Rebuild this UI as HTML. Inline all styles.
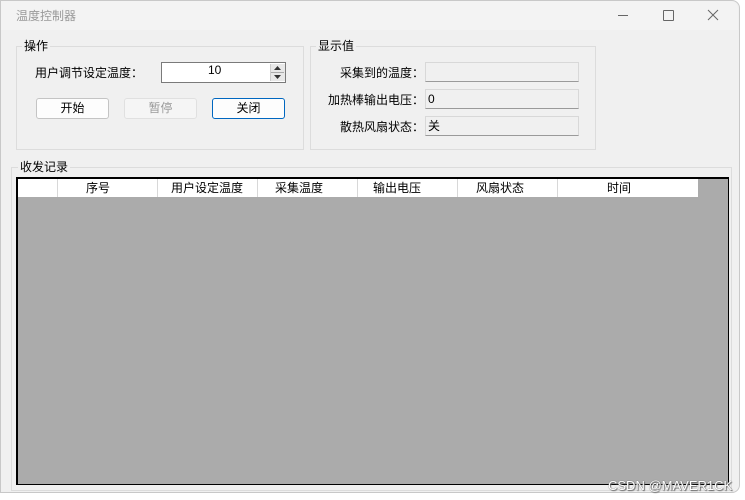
<!DOCTYPE html>
<html><head><meta charset="utf-8"><style>
body{margin:0;width:745px;height:500px;background:#fff;position:relative;overflow:hidden;font-family:"Liberation Sans","Noto Sans CJK SC",sans-serif;font-size:12px;color:#000}
.a{position:absolute}
.win{left:0;top:0;width:740px;height:493px;background:#f0f0f0;border:1px solid #c8c8c8;border-radius:0 8px 8px 0;box-sizing:border-box}
.title{left:1px;top:1px;width:737px;height:29px;background:#f3f3f3;border-radius:0 8px 0 0}
.gb{border:1px solid #dcdcdc;box-sizing:border-box}
.gl{background:#f0f0f0;padding:0 2px;font-size:12px}
.btn{height:21px;border:1px solid #c4c4c4;border-radius:3px;background:#fdfdfd;box-sizing:border-box;text-align:center;line-height:19px}
.tb{width:154px;height:20px;border:1px solid #d8d8d8;border-bottom:1px solid #9a9a9a;background:#f0f0f0;box-sizing:border-box;padding-left:2px;line-height:18px}
.lbl{text-align:right;width:120px}
.hd{top:179px;height:18px;background:#fff;border-right:1px solid #d8d8d8;box-sizing:border-box}
.ht{top:179px;line-height:18px;width:100px;text-align:center}
</style></head><body>
<div class="a win"></div>
<div class="a title"></div>
<div class="a" style="left:16px;top:7px;color:#999;font-size:12px">温度控制器</div>
<div class="a" style="left:618px;top:15px;width:10px;height:1px;background:#666"></div>
<div class="a" style="left:663px;top:10px;width:9px;height:9px;border:1px solid #666;border-radius:1px"></div>
<svg class="a" style="left:707px;top:9px" width="12" height="12"><path d="M1 1L11 11M11 1L1 11" stroke="#666" stroke-width="1"/></svg>

<div class="a gb" style="left:16px;top:46px;width:288px;height:104px"></div>
<div class="a gl" style="left:22px;top:37px">操作</div>
<div class="a" style="left:35px;top:64px">用户调节设定温度：</div>
<div class="a" style="left:161px;top:62px;width:125px;height:21px;background:#fff;border:1px solid #7a7a7a;box-sizing:border-box"></div>
<div class="a" style="left:208px;top:63px">10</div>
<div class="a" style="left:270px;top:64px;width:14px;height:17px;background:#e8e8e8;border-left:1px solid #ccc"></div>
<svg class="a" style="left:271px;top:64px" width="13" height="17"><path d="M3 6L6.5 2L10 6Z M3 11L6.5 15L10 11Z" fill="#333"/><line x1="0" y1="8.5" x2="13" y2="8.5" stroke="#aaa"/></svg>
<div class="a btn" style="left:36px;top:98px;width:73px">开始</div>
<div class="a btn" style="left:124px;top:98px;width:73px;color:#9a9a9a;border-color:#e0e0e0;background:#f5f5f5">暂停</div>
<div class="a btn" style="left:212px;top:98px;width:73px;border:1px solid #0067c0">关闭</div>

<div class="a gb" style="left:310px;top:46px;width:286px;height:104px"></div>
<div class="a gl" style="left:316px;top:37px">显示值</div>
<div class="a lbl" style="left:304px;top:64px">采集到的温度：</div>
<div class="a tb" style="left:425px;top:62px"></div>
<div class="a lbl" style="left:304px;top:91px">加热棒输出电压：</div>
<div class="a tb" style="left:425px;top:89px">0</div>
<div class="a lbl" style="left:304px;top:118px">散热风扇状态：</div>
<div class="a tb" style="left:425px;top:116px">关</div>

<div class="a gb" style="left:11px;top:167px;width:721px;height:324px"></div>
<div class="a gl" style="left:18px;top:158px">收发记录</div>
<div class="a" style="left:16px;top:177px;width:713px;height:308px;background:#ababab;border:2px solid #000;border-right-width:1px;border-bottom-width:1px;box-sizing:border-box"></div>
<div class="a hd" style="left:18px;width:40px"></div>
<div class="a hd" style="left:58px;width:100px"></div>
<div class="a hd" style="left:158px;width:100px"></div>
<div class="a hd" style="left:258px;width:100px"></div>
<div class="a hd" style="left:358px;width:100px"></div>
<div class="a hd" style="left:458px;width:100px"></div>
<div class="a hd" style="left:558px;width:140px;border-right:none"></div>
<div class="a ht" style="left:48px">序号</div>
<div class="a ht" style="left:157px">用户设定温度</div>
<div class="a ht" style="left:249px">采集温度</div>
<div class="a ht" style="left:347px">输出电压</div>
<div class="a ht" style="left:450px">风扇状态</div>
<div class="a ht" style="left:569px">时间</div>
<div class="a" style="left:608px;top:478px;color:#fff;font-size:13px;text-shadow:0 0 1px #555,1px 1px 1px #666">CSDN @MAVER1CK</div>
</body></html>
